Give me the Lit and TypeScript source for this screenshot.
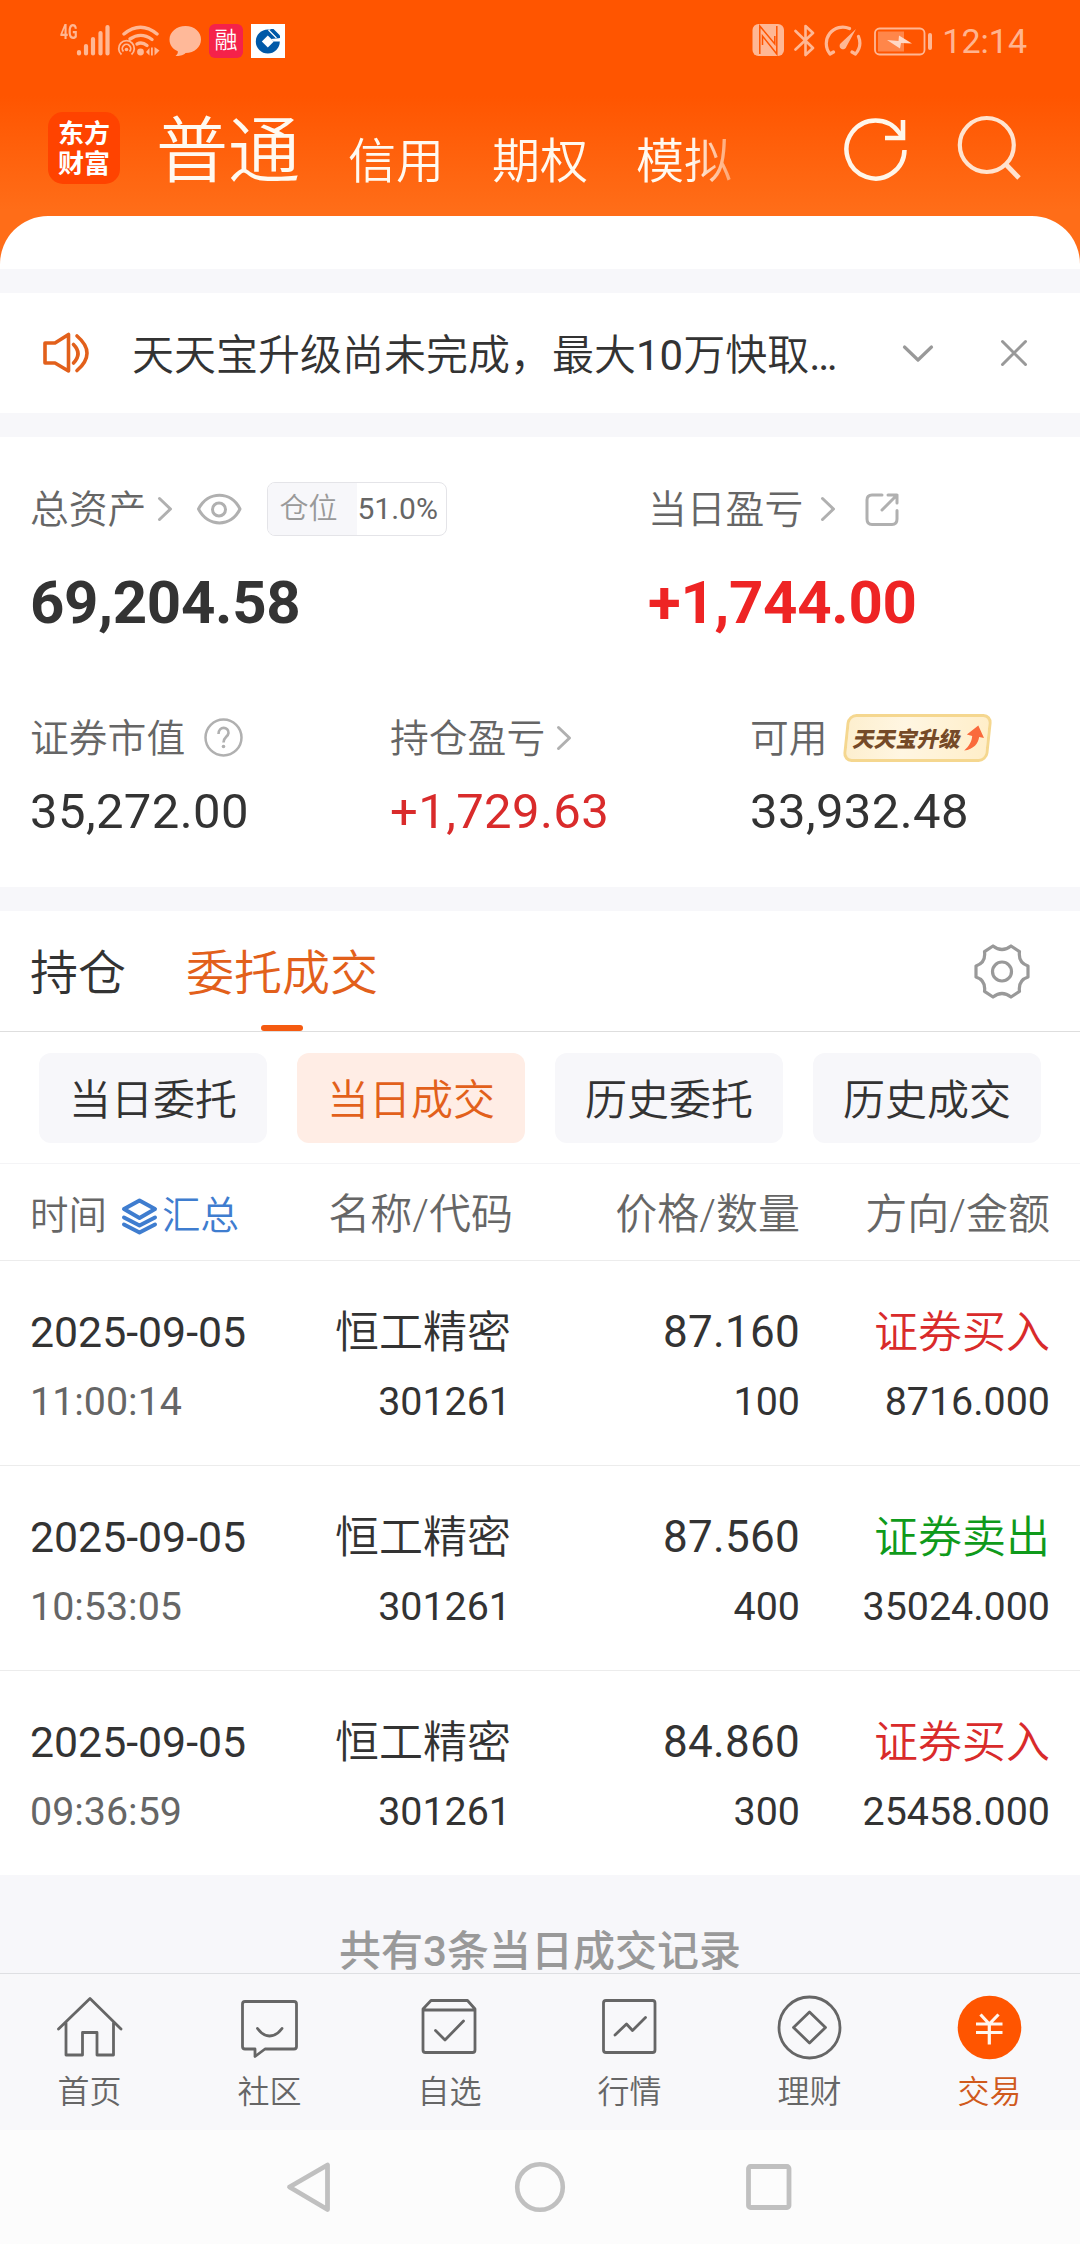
import { LitElement, html, css, svg, TemplateResult, SVGTemplateResult } from "lit";
import { customElement, property } from "lit/decorators.js";

/** Builds an inline icon; the view box origin lets each drawing keep its own coordinates. */
const icon = (x: number, y: number, w: number, h: number, body: SVGTemplateResult, cls = ""): TemplateResult => html`
  <svg class="icon ${cls}" width=${w} height=${h} viewBox="${x} ${y} ${w} ${h}" fill="none">${body}</svg>`;

const chevron = icon(156, 495, 18, 28, svg`<path d="M159.500 498.500L170.500 509L159.500 519.500" stroke="#b0b0b0" stroke-width="3" stroke-linecap="round" stroke-linejoin="round"/>`);

const base = css`
  :host {
    display: block;
    flex: none;
    font-family: Roboto, "Noto Sans CJK SC", sans-serif;
    color: #333;
  }
  * { box-sizing: border-box; }
  .icon { display: block; flex: none; }
`;

@customElement("status-bar")
class StatusBar extends LitElement {
  static styles = [base, css`
    .bar { display: flex; height: 82px; padding: 24px 53px 0 60px; align-items: flex-start; color: rgba(255, 255, 255, 0.58); }
    .net { font-size: 20px; line-height: 17px; font-weight: 700; width: 16px; transform: scaleX(0.7); transform-origin: left; }
    .app { width: 34px; height: 34px; border-radius: 6px; background: #f5224a; color: #fff; font-size: 23px; line-height: 34px; text-align: center; margin: 0 8px 0 7px; font-weight: 350; }
    .space { flex: 1; }
    .time { font-size: 34px; line-height: 35px; margin-left: 9px; }
    .wifi { margin-left: 6px; }
    .chat { margin-left: 8px; }
    .bt { margin-left: 9px; }
    .gauge { margin-left: 8px; }
    .batt { margin-left: 10px; }
  `];
  render() {
    return html`<div class="bar">
      <span class="net">4G</span>
      ${icon(76, 24, 35, 34, svg`<path d="M79 52V53.500M86 46V53.500M93 39V53.500M100.500 33V53.500M107.500 27V53.500" stroke="currentColor" stroke-width="4.200" stroke-linecap="round"/>`)}
      ${icon(117, 24, 44, 34, svg`
        <g stroke="currentColor" stroke-width="3.400" stroke-linecap="round">
          <path d="M124 34Q140.500 20.500 157 34"/><path d="M130 39Q141 31.500 152 39.500"/><path d="M137 44Q142 41.500 147 45.500"/>
        </g>
        <circle cx="140.500" cy="52" r="3.400" fill="currentColor"/>
        <g stroke="currentColor" stroke-width="1.800">
          <path d="M121.500 54.500A7.800 7.800 0 1 1 131.500 54.500"/><path d="M123.500 51.500A4.200 4.200 0 1 1 129.500 51.500"/>
        </g>
        <circle cx="126.500" cy="49.500" r="1.800" fill="currentColor"/>
        <path d="M146 52L149.500 48V55.500ZM151 47.500H152.800V55.500H151ZM159.500 50.500L154.500 47V55.500Z" fill="currentColor"/>`, "wifi")}
      ${icon(168, 24, 33, 34, svg`<path d="M184.500 26C193.500 26 200 32 200 39.500C200 47 193.500 53 184.500 53C183 55 178 56.500 174.500 56C176.500 54.500 177 53 176.800 51.300C171.500 49 168.500 45 168.500 39.500C168.500 32 175.500 26 184.500 26Z" fill="#ffb999"/>`, "chat")}
      <span class="app">融</span>
      ${icon(251, 24, 34, 34, svg`
        <rect x="251" y="24" width="34" height="34" fill="#fff"/>
        <circle cx="267.800" cy="41.500" r="12" fill="#0059a8"/>
        <path d="M267.800 35.500L273.800 41.500L267.800 47.500L261.800 41.500Z" fill="#fff"/>
        <path d="M271 39L281 38V41.500H274Z" fill="#fff"/>
        <path d="M268.500 30L276.500 38" stroke="#fff" stroke-width="1.300"/>
        <path d="M270 29H273.500L280 35.500V38H277.500Z" fill="#0059a8"/>`)}
      <span class="space"></span>
      ${icon(752, 24, 33, 34, svg`
        <rect x="752.500" y="24" width="31.500" height="32" rx="6" fill="currentColor"/>
        <path d="M759.800 54V26L774.800 44V36M776.800 26V54L762.500 36V45" stroke="#ff5500" stroke-width="1.500"/>`)}
      ${icon(794, 24, 22, 34, svg`<path d="M795.500 31L813 48L805.500 55V26L813 33L795.500 49.500" stroke="currentColor" stroke-width="2.600" stroke-linejoin="round" stroke-linecap="round"/>`, "bt")}
      ${icon(824, 24, 38, 34, svg`
        <path d="M849.500 28.500A16.500 16.500 0 0 0 830 54L833.500 52M858.500 36.500A17 17 0 0 1 855.500 54L852 52" stroke="currentColor" stroke-width="3.200" stroke-linecap="round" stroke-linejoin="round"/>
        <path d="M856 29L846.500 46.500A3.500 3.500 0 1 1 841 43Z" fill="currentColor"/>`, "gauge")}
      ${icon(872, 24, 61, 34, svg`
        <rect x="875" y="28.500" width="49.500" height="26" rx="4.500" stroke="currentColor" stroke-width="1.800"/>
        <rect x="878" y="31.500" width="26" height="20" fill="currentColor" opacity=".5"/>
        <rect x="928" y="33" width="4" height="17" rx="2" fill="currentColor"/>
        <path d="M887 40L898.500 41L899 35.500L912 43.500L901 43L900 48.500Z" fill="#ffd9c7"/>`, "batt")}
      <span class="time">12:14</span>
    </div>`;
  }
}

@customElement("account-nav")
class AccountNav extends LitElement {
  static styles = [base, css`
    .nav { display: flex; height: 134px; padding-left: 48px; align-items: flex-start; color: #fff9f0; }
    .logo { margin-top: 30px; width: 72px; height: 72px; border-radius: 15px; background: #ff4300; color: #fff; font-weight: 700; font-size: 26px; line-height: 30px; padding: 7px 0 0 10px; }
    .logo div { white-space: nowrap; }
    .tabs { display: flex; gap: 48px; margin-left: 36px; width: 584px; overflow: hidden; font-weight: 350; -webkit-mask-image: linear-gradient(90deg, #000 535px, rgba(0, 0, 0, 0.3) 584px); mask-image: linear-gradient(90deg, #000 535px, rgba(0, 0, 0, 0.3) 584px); }
    .tab { font-size: 48px; line-height: 60px; margin-top: 50px; white-space: nowrap; }
    .tab.on { font-size: 72px; line-height: 100px; margin-top: 20px; }
    .reload { margin: 34px 0 0 103px; }
    .search { margin: 32px 0 0 48px; }
  `];
  render() {
    return html`<div class="nav">
      <div class="logo"><div>东方</div><div>财富</div></div>
      <div class="tabs">
        <span class="tab on">普通</span><span class="tab">信用</span><span class="tab">期权</span><span class="tab">模拟</span>
      </div>
      ${icon(843, 116, 66, 66, svg`<path d="M904.500 150A29 29 0 1 1 899 132.500L903 138" stroke="#fff6ea" stroke-width="4.500"/><path d="M885 138H903V120" stroke="#fff6ea" stroke-width="4.600"/>`, "reload")}
      ${icon(957, 114, 66, 68, svg`<circle cx="986.800" cy="145" r="27" stroke="#ffe3cf" stroke-width="4.200"/><path d="M1005.500 164L1019 178" stroke="#ffe3cf" stroke-width="4.800"/>`, "search")}
    </div>`;
  }
}

@customElement("notice-bar")
class NoticeBar extends LitElement {
  static styles = [base, css`
    .notice { display: flex; align-items: center; height: 120px; padding: 0 52px 0 41px; background: #fff; }
    .text { font-size: 42px; line-height: 60px; margin: 5px 0 0 41px; flex: 1; white-space: nowrap; font-weight: 350; }
    .num { font-weight: 400; }
    .close { margin-left: 65px; }
  `];
  render() {
    return html`<div class="notice">
      ${icon(41, 329, 50, 48, svg`<g stroke="#e2601b" stroke-width="3.600" stroke-linecap="round" stroke-linejoin="round">
        <path d="M45 343H55L68.500 334.500V371L55 363H45Z"/><path d="M73.500 344.500Q82.500 353.500 73.500 363"/><path d="M77 336Q97 353 77 370.500"/></g>`)}
      <div class="text">天天宝升级尚未完成，最大<span class="num">10</span>万快取<span class="num">…</span></div>
      ${icon(901, 341, 34, 24, svg`<path d="M904.500 347L918 360L931.500 347" stroke="#999" stroke-width="3.200" stroke-linecap="round" stroke-linejoin="round"/>`)}
      ${icon(1000, 339, 28, 28, svg`<path d="M1002.500 341.500L1025.500 364.500M1025.500 341.500L1002.500 364.500" stroke="#999" stroke-width="3" stroke-linecap="round"/>`, "close")}
    </div>`;
  }
}

@customElement("asset-panel")
class AssetPanel extends LitElement {
  static styles = [base, css`
    .panel { background: #fff; height: 450px; padding: 45px 30px 0; }
    .row { display: grid; }
    .two { grid-template-columns: 618px 1fr; }
    .three { grid-template-columns: 360px 360px 1fr; margin-top: 70px; }
    .label { display: flex; align-items: center; height: 54px; font-size: 38.800px; color: #666; font-weight: 350; }
    .label .t { line-height: 54px; padding-top: 2px; white-space: nowrap; }
    .big { font-size: 60px; line-height: 76px; font-weight: 700; margin-top: 29px; letter-spacing: -0.300px; }
    .val { font-size: 49px; line-height: 60px; margin-top: 17px; font-weight: 400; letter-spacing: 0.400px; }
    .red { color: #d92b2b; }
    .big.red { color: #ee2424; }
    .gap9 { margin-left: 10px; }
    .gap14 { margin-left: 16px; }
    .help { margin-left: 18px; }
    .eye { margin-left: 21px; }
    .out { margin-left: 25px; }
    .pos { display: flex; margin-left: 24px; width: 180px; height: 54px; border: 1.500px solid #e4e4e8; border-radius: 8px; font-size: 29px; line-height: 51px; overflow: hidden; }
    .pos .k { width: 89px; background: #f7f7fa; color: #999; padding-left: 11px; padding-top: 1px; }
    .pos .v { color: #666; font-weight: 400; font-size: 30px; white-space: nowrap; }
    .badge { display: flex; align-items: center; margin-left: 17px; width: 145px; height: 48px; border: 3px solid #f5d78f; border-radius: 9px; background: linear-gradient(90deg, #fdefcf, #fff6e2 40%, #ffeec9); transform: skewX(-6deg); padding-left: 6px; font: 900 21.500px/42px "Noto Sans CJK SC", sans-serif; color: #754a28; white-space: nowrap; }
    .badge span { transform: skewX(-6deg); }
    .up { margin-left: 3px; }
  `];
  render() {
    return html`<div class="panel">
      <div class="row two">
        <div>
          <div class="label"><span class="t">总资产</span><span class="gap9">${chevron}</span>
            ${icon(195, 489, 48, 36, svg`<path d="M198.500 507C208 488.500 231 488.500 240 507C231 525.500 208 525.500 198.500 507Z" stroke="#b0b0b0" stroke-width="3" stroke-linejoin="round"/><circle cx="219" cy="507.500" r="6.500" stroke="#b0b0b0" stroke-width="3"/>`, "eye")}
            <div class="pos"><div class="k">仓位</div><div class="v">51.0%</div></div>
          </div>
          <div class="big">69,204.58</div>
        </div>
        <div>
          <div class="label"><span class="t">当日盈亏</span><span class="gap14">${chevron}</span>
            ${icon(862, 489, 40, 38, svg`<g stroke="#b0b0b0" stroke-width="3" stroke-linecap="round" stroke-linejoin="round"><path d="M882 494H872Q867 494 867 499V518Q867 523.500 872 523.500H892Q897 523.500 897 518V509.500"/><path d="M888 494H897V502M897 494L882 509"/></g>`, "out")}
          </div>
          <div class="big red">+1,744.00</div>
        </div>
      </div>
      <div class="row three">
        <div>
          <div class="label"><span class="t">证券市值</span>
            ${icon(203, 718, 42, 42, svg`<circle cx="223.500" cy="738.500" r="18" stroke="#b0b0b0" stroke-width="2.500"/><path d="M218.500 735C218.500 726.500 229 727.500 228.500 734C228 738 223.500 738 223.500 743.500" stroke="#b0b0b0" stroke-width="2.600"/><circle cx="223.500" cy="747.500" r="1.800" fill="#b0b0b0"/>`, "help")}
          </div>
          <div class="val">35,272.00</div>
        </div>
        <div>
          <div class="label"><span class="t">持仓盈亏</span><span class="gap9">${chevron}</span></div>
          <div class="val red">+1,729.63</div>
        </div>
        <div>
          <div class="label"><span class="t">可用</span>
            <div class="badge"><span>天天宝升级</span>
              ${icon(965, 724, 20, 26, svg`<path d="M977 724.500L984 737L979 736C979 742 975 748.500 965.500 749.500C970 745 972 741 972 735L966.500 733.500Z" fill="#fa6a3c"/>`, "up")}
            </div>
          </div>
          <div class="val">33,932.48</div>
        </div>
      </div>
    </div>`;
  }
}

type Deal = { date: string; time: string; name: string; code: string; price: string; qty: string; side: string; amount: string; buy: boolean };

@customElement("deal-list")
class DealList extends LitElement {
  @property({ attribute: false }) deals: Deal[] = [];
  static styles = [base, css`
    .wrap { background: #fff; }
    .tabs { display: flex; height: 121px; padding: 0 50px 0 30px; border-bottom: 1px solid #dedede; font-size: 48px; font-weight: 350; }
    .tab { display: flex; flex-direction: column; align-items: center; justify-content: space-between; line-height: 70px; padding-top: 28px; white-space: nowrap; }
    .tab.on { color: #e2601b; margin-left: 60px; }
    .line { width: 42px; height: 6px; border-radius: 3px; background: #f55a10; }
    .gear { margin: 32px 0 0 auto; }
    .chips { display: flex; gap: 30px; padding: 21px 39px 20px; border-bottom: 1px solid #f4f4f6; }
    .chip { flex: 1; height: 90px; border-radius: 12px; background: #f7f7fa; text-align: center; font-size: 42px; line-height: 90px; padding-top: 3px; font-weight: 350; }
    .chip.on { background: #ffede5; color: #e2601b; }
    .grid { display: grid; grid-template-columns: 250px 231px 289px 250px; padding: 0 30px; text-align: right; }
    .head { height: 97px; border-bottom: 1px solid #ececec; font-size: 42px; line-height: 96px; padding-top: 3px; color: #666; font-weight: 350; white-space: nowrap; }
    .name { margin-right: -2px; }
    .when { display: flex; align-items: center; font-size: 38.500px; height: 98px; }
    .sum { color: #3f7dcf; margin-left: 4px; }
    .layers { margin-left: 13px; }
    .deal { height: 205px; padding-top: 37px; border-bottom: 1px solid #ececec; }
    .deal:last-child { height: 204px; border-bottom: 0; }
    .l { text-align: left; }
    .a { font-size: 42.800px; line-height: 68px; }
    .price { font-size: 44px; letter-spacing: 0.300px; }
    .b { font-size: 39.400px; line-height: 72px; }
    .zh { font-size: 44px; line-height: 70px; margin-bottom: -2px; font-weight: 350; }
    .dim { color: #666; }
    .buy { color: #d92b2b; }
    .sell { color: #0f9a1b; }
  `];
  render() {
    const chips = ["当日委托", "当日成交", "历史委托", "历史成交"];
    return html`<div class="wrap">
      <div class="tabs">
        <div class="tab"><span>持仓</span></div>
        <div class="tab on"><span>委托成交</span><i class="line"></i></div>
        ${icon(974, 943, 56, 56, svg`<g stroke="#999" stroke-width="3.200" stroke-linejoin="round">
          <path d="M993 946L984.500 951.700C985.500 959 982 964 976 966V977C982 979 985.500 984 984.500 991.300L993 997Q1002 990 1011 997L1019.500 991.300C1018.500 984 1022 979 1028 977V966C1022 964 1018.500 959 1019.500 951.700L1011 946Q1002 953 993 946Z"/>
          <circle cx="1002" cy="971.500" r="9.500"/></g>`, "gear")}
      </div>
      <div class="chips">${chips.map((c, i) => html`<div class="chip ${i === 1 ? "on" : ""}">${c}</div>`)}</div>
      <div class="grid head">
        <div class="when"><span>时间</span>
          ${icon(120, 1196, 38, 40, svg`<g stroke="#3f7dcf" stroke-width="4" stroke-linejoin="round" stroke-linecap="round"><path d="M139.500 1200.500L155 1209L139.500 1218L124 1209Z"/><path d="M124 1217.500L139.500 1225.500L155 1217.500"/><path d="M124 1224.500L139.500 1232.500L155 1224.500"/></g>`, "layers")}
          <span class="sum">汇总</span></div>
        <div class="name">名称/代码</div><div>价格/数量</div><div>方向/金额</div>
      </div>
      ${this.deals.map((d) => html`<div class="grid deal">
        <div class="l"><div class="a">${d.date}</div><div class="b dim">${d.time}</div></div>
        <div><div class="zh">${d.name}</div><div class="b">${d.code}</div></div>
        <div><div class="a price">${d.price}</div><div class="b">${d.qty}</div></div>
        <div><div class="zh ${d.buy ? "buy" : "sell"}">${d.side}</div><div class="b">${d.amount}</div></div>
      </div>`)}
    </div>`;
  }
}

@customElement("bottom-bar")
class BottomBar extends LitElement {
  static styles = [base, css`
    .bar { display: grid; grid-template-columns: repeat(6, 1fr); height: 157px; border-top: 1px solid #dedfe2; background: #f8f8fa; color: #666; }
    .item { display: flex; flex-direction: column; align-items: center; padding-top: 20px; font-size: 32px; font-weight: 350; }
    .item span { line-height: 44px; margin: 9px 1px 0 0; }
    .item.on { color: #d05a1c; }
    .sys { display: flex; justify-content: center; align-items: center; height: 114px; background: #fcfcfc; gap: 180px; }
  `];
  render() {
    const line = (body: SVGTemplateResult, cx: number) => icon(cx - 33, 1994, 66, 67, svg`<g stroke="#666" stroke-width="2.800" stroke-linejoin="round" stroke-linecap="round">${body}</g>`);
    return html`<div class="bar">
        <div class="item">${line(svg`<path d="M58.500 2029L90 1998.500L121 2029M66 2023V2055H82.500V2032.500H97V2055H113.500V2023"/>`, 90)}<span>首页</span></div>
        <div class="item">${line(svg`<path d="M245 2001.500H294Q296.500 2001.500 296.500 2004V2046.500Q296.500 2049 294 2049H265L255 2056.500V2049H245Q242.500 2049 242.500 2046.500V2004Q242.500 2001.500 245 2001.500ZM257.500 2028.500Q263 2036 269.500 2036Q276.500 2036 282 2028.500"/>`, 270)}<span>社区</span></div>
        <div class="item">${line(svg`<path d="M423 2009L431 2000.500H467.500L475 2009V2050Q475 2052.500 472.500 2052.500H425.500Q423 2052.500 423 2050ZM423 2010H475M435.500 2030.500L445 2040L463.500 2021"/>`, 450)}<span>自选</span></div>
        <div class="item">${line(svg`<rect x="603.500" y="2000.500" width="51.500" height="52" rx="2.500"/><path d="M615 2035L626.500 2024L632.500 2030.500L645.500 2017.500"/>`, 630)}<span>行情</span></div>
        <div class="item">${line(svg`<circle cx="809.500" cy="2027.500" r="30.500"/><path d="M809.500 2012L825.500 2027.500L809.500 2043L793.500 2027.500Z"/>`, 810)}<span>理财</span></div>
        <div class="item on">${icon(957, 1994, 66, 67, svg`<circle cx="989.500" cy="2027.500" r="31.800" fill="#ff5500"/><path d="M980.500 2014.500L989.300 2024L998.500 2014.500M976 2024H1002.500M976 2032.500H1002.500M989.300 2024V2044.500" stroke="#fff6ee" stroke-width="3.200"/>`)}<span>交易</span></div>
      </div>
      <div class="sys">
        ${icon(284, 2161, 50, 52, svg`<path d="M327.500 2165V2209.500L289.500 2187Z" stroke="#c0c0c0" stroke-width="4.800" stroke-linejoin="round"/>`)}
        ${icon(514, 2161, 52, 52, svg`<circle cx="540" cy="2187" r="22.800" stroke="#c0c0c0" stroke-width="4.600"/>`)}
        ${icon(746, 2161, 50, 52, svg`<rect x="748.500" y="2166.500" width="40.500" height="41" rx="2" stroke="#c0c0c0" stroke-width="4.800"/>`)}
      </div>`;
  }
}

@customElement("app-root")
class AppRoot extends LitElement {
  static styles = [base, css`
    :host { width: 1080px; height: 2244px; overflow: hidden; background: #f7f7fa; }
    .page { display: flex; flex-direction: column; height: 2244px; }
    .top { flex: none; height: 269px; background: linear-gradient(180deg, #ff5500 0, #ff5500 96px, #ff6d18 210px, #ff6d18 100%); }
    .sheet { height: 53px; background: #fff; border-radius: 48px 48px 0 0; }
    .gap { flex: none; height: 24px; }
    .foot { flex: 1; min-height: 0; padding-top: 53px; text-align: center; color: #999; font-size: 42px; line-height: 48px; font-weight: 500; }
  `];
  private deals: Deal[] = [
    { date: "2025-09-05", time: "11:00:14", name: "恒工精密", code: "301261", price: "87.160", qty: "100", side: "证券买入", amount: "8716.000", buy: true },
    { date: "2025-09-05", time: "10:53:05", name: "恒工精密", code: "301261", price: "87.560", qty: "400", side: "证券卖出", amount: "35024.000", buy: false },
    { date: "2025-09-05", time: "09:36:59", name: "恒工精密", code: "301261", price: "84.860", qty: "300", side: "证券买入", amount: "25458.000", buy: true },
  ];
  render() {
    return html`<div class="page">
      <div class="top"><status-bar></status-bar><account-nav></account-nav><div class="sheet"></div></div>
      <div class="gap"></div>
      <notice-bar></notice-bar>
      <div class="gap"></div>
      <asset-panel></asset-panel>
      <div class="gap"></div>
      <deal-list .deals=${this.deals}></deal-list>
      <div class="foot">共有3条当日成交记录</div>
      <bottom-bar></bottom-bar>
    </div>`;
  }
}
